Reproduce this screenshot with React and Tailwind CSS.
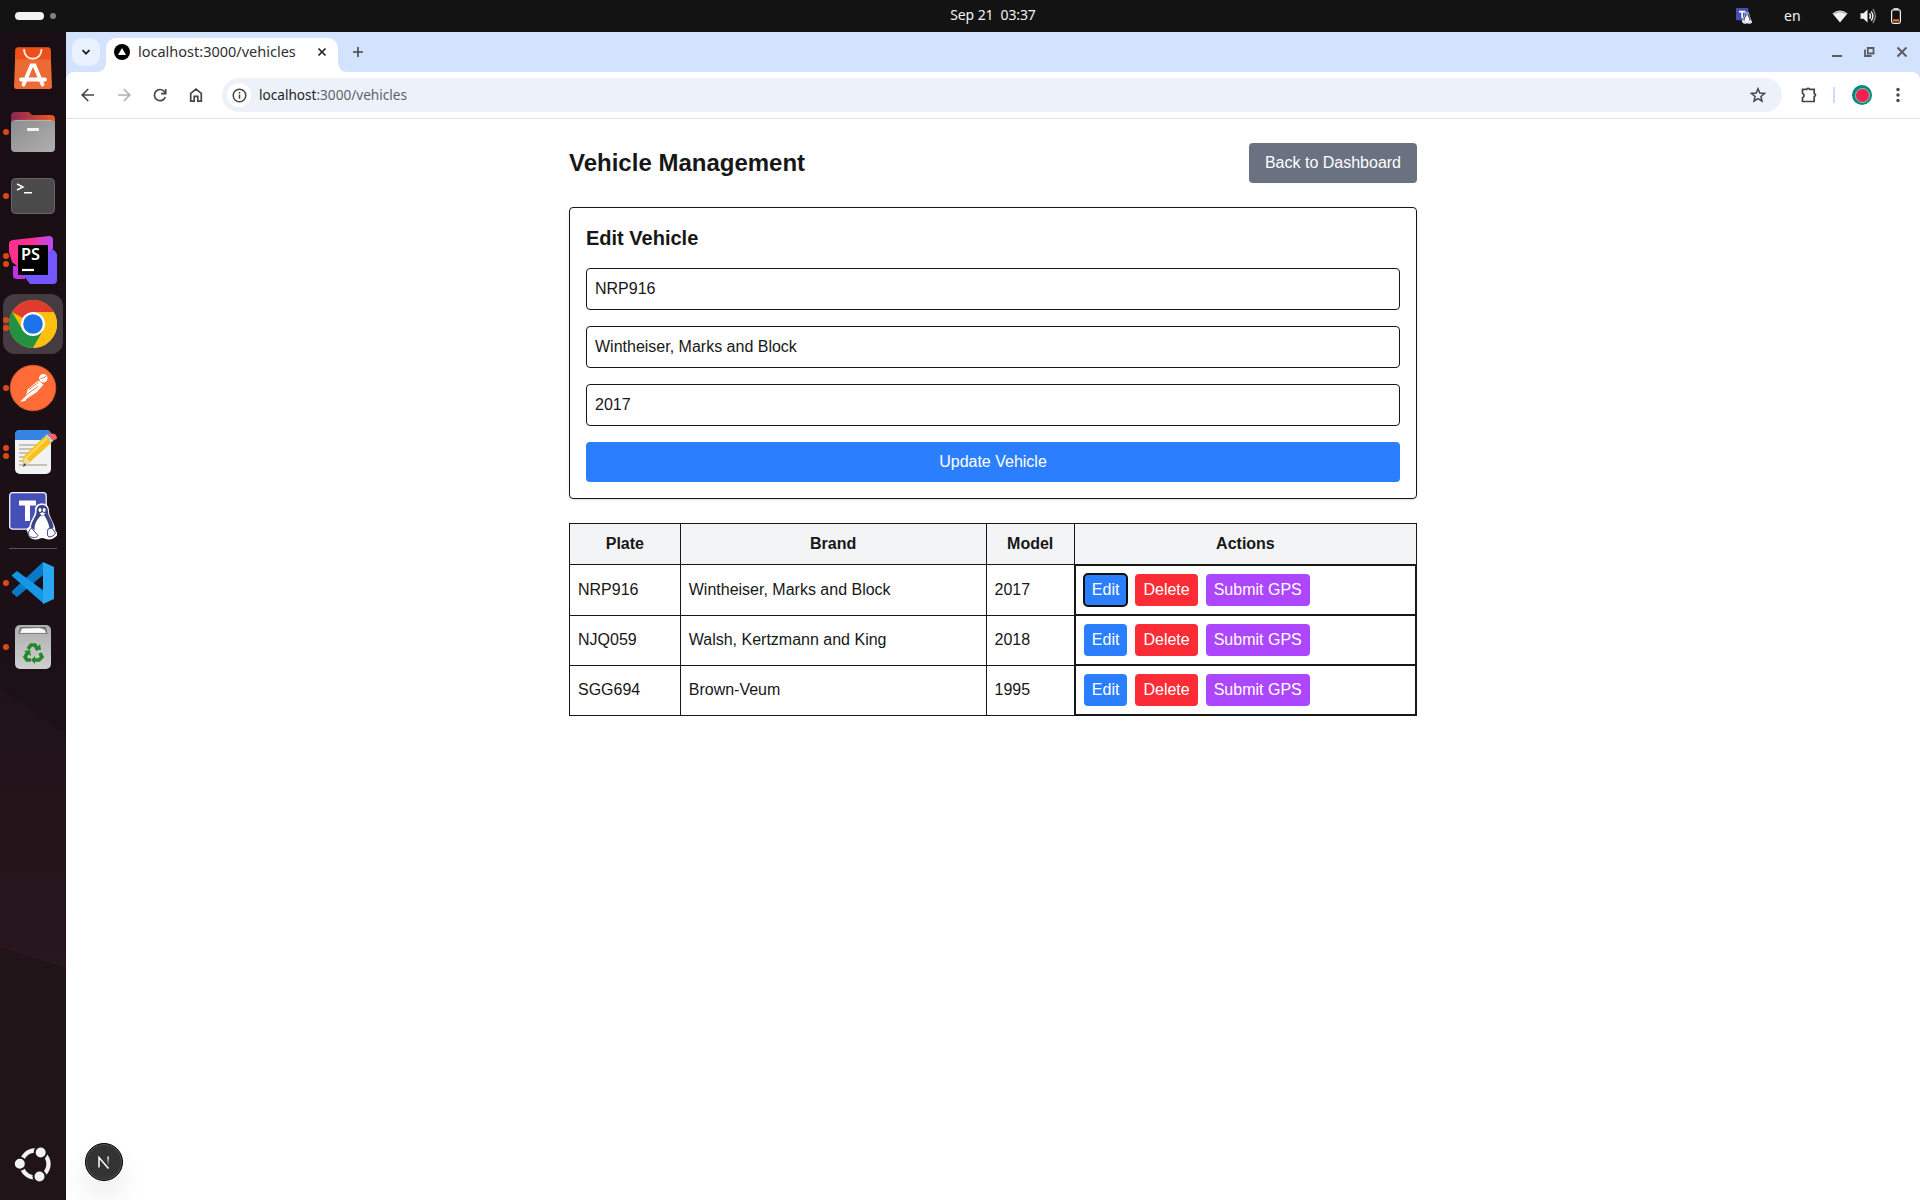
const iconStroke = "fill-none stroke-[#454746]";

function Dots({ n }) {
  return (
    <span className="flex w-[11px] shrink-0 flex-col items-end gap-[2px] pr-[2.5px]">
      {Array.from({ length: n }).map((_, i) => (
        <span key={i} className="h-[6px] w-[6px] rounded-full bg-[#dd4814]" />
      ))}
    </span>
  );
}

function DockItem({ dots, active, children }) {
  return (
    <div className="flex h-16 w-[66px] items-center">
      <div className={active ? "ml-[3px] flex h-[60px] w-[60px] items-center rounded-xl bg-[#453c41]" : "ml-[3px] flex h-[60px] w-[60px] items-center rounded-xl"}>
        <div className="-ml-[3px] flex items-center">
          <Dots n={dots} />
          <svg viewBox="0 0 48 48" className="-ml-[2px] h-12 w-12">{children}</svg>
        </div>
      </div>
    </div>
  );
}

function Penguin() {
  return (
    <g>
      <path d="M33 11.500c-5.500 0-7.500 3.500-7 8.500-.5 4-5 9-5.500 14.500-3 2-3.500 3.500-2 5.500.5 5 4 7.500 8.500 7.500 3 0 4-1.500 6-1.500s4 1.500 7 1.500c3 0 4.500-1 7-3 2-1.500 1.500-4.500-.5-5.500 0-7-6-13-6.500-19C40 15 38.500 11.500 33 11.500z" fill="#fff" />
      <path d="M33 13c-4 0-6 3-5.500 7.500-.5 4.500-5.500 9.500-5.500 15l3.500 2.500h15l4-2.500c0-6-5-10-5.500-15.500C39 15.500 37 13 33 13z" fill="#3b4383" />
      <path d="M32.500 23.500c-4 2.500-7 8-7 13.500 2 6.500 12 6.500 15 .5 0-5.500-3.500-11-5-14z" fill="#fff" />
      <ellipse cx="31" cy="18" rx="1.500" ry="2" fill="#fff" />
      <ellipse cx="35.200" cy="18" rx="1.500" ry="2" fill="#fff" />
      <path d="M30.500 21.500l3-1.200 3 1.200-3 2.200z" fill="#fff" />
      <path d="M22.500 36l6.500 7.500c-1 2.500-5 2.500-8 1-2-1-1.500-4-1-5.500zM43 36l3.500 5c-1 2-3.500 4-6.500 4-2-1-2-4-1-8z" fill="#fff" stroke="#3b4383" strokeWidth="1" />
    </g>
  );
}

function Dock() {
  return (
    <aside className="grid w-[66px] shrink-0">
      <svg viewBox="0 0 66 1168" preserveAspectRatio="none" className="col-start-1 row-start-1 h-full w-[66px]">
        <defs>
          <linearGradient id="wall" x1="0" y1="0" x2="0" y2="1"><stop stopColor="#180e14" /><stop offset=".5" stopColor="#1b1016" /><stop offset="1" stopColor="#1f1218" /></linearGradient>
          <linearGradient id="facet" x1="0" y1="0" x2="0" y2="1"><stop stopColor="#20121b" /><stop offset=".5" stopColor="#231519" /><stop offset="1" stopColor="#281620" /></linearGradient>
        </defs>
        <rect width="66" height="1168" fill="url(#wall)" />
        <path d="M0 656l66 46v234L0 916z" fill="url(#facet)" />
        <path d="M0 916l66 20v232H0z" fill="#201419" />
      </svg>
      <nav className="col-start-1 row-start-1 flex flex-col pt-[3.500px]">
        <DockItem dots={0}>
          <path d="M8.500 3.500h31q1.800 0 2 2l1.500 37q0 2.500-2.500 2.500h-33Q5 45 5 42.500L6.500 5.500q.2-2 2-2z" fill="#ee6a34" />
          <path d="M8.500 3.500h31q1.800 0 2 2l.5 10H6l.5-10q.2-2 2-2z" fill="#ef4f19" />
          <path d="M15 5c0 13 17.500 13 17.500 0" fill="none" stroke="#fff1ea" strokeWidth="1.800" />
          <path d="M14.500 40.500l8-19h3l8 19M12 35.500h24" fill="none" stroke="#fff" strokeWidth="3.800" strokeLinecap="round" />
        </DockItem>
        <DockItem dots={1}>
          <defs>
            <linearGradient id="folder" x1="0" x2="1"><stop stopColor="#872656" /><stop offset="1" stopColor="#f2581c" /></linearGradient>
            <linearGradient id="front" x1="0" y1="0" x2="1" y2="1"><stop stopColor="#8c8c8c" /><stop offset="1" stopColor="#b0b0b0" /></linearGradient>
          </defs>
          <path d="M2 8q0-4 4-4h14l3 3h19q4 0 4 4v12H2z" fill="url(#folder)" />
          <rect x="2" y="12" width="44" height="32" rx="4" fill="url(#front)" />
          <path d="M6 12.400h36" stroke="#bbb" strokeWidth=".8" />
          <rect x="18" y="20" width="12" height="3" rx=".8" fill="#f4f4f4" />
        </DockItem>
        <DockItem dots={1}>
          <rect x="2.500" y="6.500" width="43" height="35" rx="4" fill="#4a4a4a" stroke="#666" />
          <path d="M8 12l6 3-6 3M15 20.800h8" fill="none" stroke="#fff" strokeWidth="1.500" />
        </DockItem>
        <DockItem dots={2}>
          <defs><linearGradient id="ps" x1="0" y1="0" x2="1" y2="0"><stop stopColor="#ff318c" /><stop offset=".5" stopColor="#ff2f94" /><stop offset="1" stopColor="#b74af7" /></linearGradient></defs>
          <path d="M39 14h6l3 4v26q0 4-4 4H21l-6-8z" fill="#7256ff" />
          <path d="M4 30h12v13H8q-4 0-4-3z" fill="#bd34e6" />
          <path d="M4 4L40 0q4 0 4 4v9L12 33 3 26 0 16V8q0-3.500 4-4z" fill="url(#ps)" />
          <rect x="9" y="9" width="30" height="30" fill="#000" />
          <text x="12" y="24.300" fontFamily="Noto Sans, sans-serif" fontSize="15.500" fontWeight="600" fill="#fff" textLength="19" lengthAdjust="spacingAndGlyphs">PS</text>
          <path d="M13 34h12" stroke="#fff" strokeWidth="2.200" />
        </DockItem>
        <DockItem dots={2} active>
          <circle cx="24" cy="24" r="24" fill="#fbbc04" />
          <path d="M24 24L3.200 12A24 24 0 0 1 44.800 12z" fill="#df3b2e" />
          <path d="M3.200 12A24 24 0 0 0 24 48L34.400 30 13.600 30z" fill="#249041" />
          <path d="M24 12h20.800A24 24 0 0 1 24 48l10.400-18z" fill="#fcc011" />
          <circle cx="24" cy="24" r="12" fill="#fff" /><circle cx="24" cy="24" r="9.800" fill="#1a73e8" />
        </DockItem>
        <DockItem dots={1}>
          <circle cx="24" cy="24" r="22.800" fill="#ff6c37" stroke="#dc5726" strokeWidth=".8" />
          <circle cx="34.300" cy="14.200" r="4.200" fill="#fff" />
          <path d="M29.500 16.500l5 4-6.500 7.500-10 6.500-2 2.500-5 .8 5.500-5.300 2.500-7.500z" fill="#fff" />
          <path d="M31.500 14.500l3.500-.8 2.500-2M20 25.500l9.500-7M20.500 28.500l9-6.500M15 33l6-5" fill="none" stroke="#ff6c37" strokeWidth=".9" />
        </DockItem>
        <DockItem dots={2}>
          <rect x="6" y="2" width="36" height="44" rx="5" fill="#f2f2f2" />
          <path d="M6 12V7q0-5 5-5h26q5 0 5 5v5z" fill="#3584e4" />
          <path d="M10 17h18M10 21h16M10 25h14M10 29h11M10 33h8M10 37h28" stroke="#c6c2b6" strokeWidth="1.800" />
          <path d="M36 8l6.500 6.500-22 20-4.500 2.500-3-3 2-6z" fill="#f6c21b" />
          <path d="M38 10l-21 20" stroke="#ffdc60" strokeWidth="2" />
          <path d="M16 29l5 5-6 4-1-2z" fill="#f0dcb0" /><path d="M15 35l2 2-3 2z" fill="#333" />
          <path d="M36 8l2-2 6.500 6.500-2 2z" fill="#ccc" /><path d="M38 6q4-1 7-.3 3 1.300 3 5l-3.500 1.800z" fill="#ef6464" />
        </DockItem>
        <DockItem dots={0}>
          <rect x=".7" y=".7" width="36.500" height="36.500" rx="3" fill="#464eb8" stroke="#f5f5ff" strokeWidth="1.300" />
          <path d="M10 11h17M18.500 11v18" stroke="#fff" strokeWidth="5" />
          <Penguin />
        </DockItem>
        <div className="mx-[9px] h-px bg-[#5a5155]" />
        <div className="mt-[2px]">
          <DockItem dots={1}>
            <path d="M34 3v13L8 38 3 34v-2z" fill="#0879c7" />
            <path d="M3 16l5-4 27 20v13L3 17z" fill="#1596e6" />
            <path d="M34 3l11 5v32l-11 5V3z" fill="#29a8f2" />
          </DockItem>
        </div>
        <DockItem dots={1}>
          <defs><linearGradient id="bin" x1="0" y1="0" x2="0" y2="1"><stop stopColor="#aeaeae" /><stop offset="1" stopColor="#cfcfcf" /></linearGradient></defs>
          <rect x="6" y="2" width="36" height="44" rx="5" fill="url(#bin)" />
          <path d="M9.500 11l1.500-6q.3-1 1.500-1h23q1.200 0 1.500 1l1.500 6z" fill="#6a6a6a" />
          <path d="M11 10l2-4.500 17-.5 5.500 1.500L37 10z" fill="#fafafa" stroke="#ccc" strokeWidth=".5" />
          <g fill="none" stroke="#25882a" strokeWidth="3.600">
            <path d="M19 26l3-4h4l3 5" /><path d="M31 30l2 4-3 3h-5" /><path d="M22 37h-4l-2-3 3-5" />
          </g>
          <path d="M26 27h6l-1-6zM26 33v8l-4-4zM15 28l6-1 1 6z" fill="#25882a" />
        </DockItem>
        <div className="mt-auto mb-3 flex justify-center">
          <svg viewBox="0 0 48 48" className="h-12 w-12">
            <circle cx="26" cy="24" r="13.500" fill="none" stroke="#f2f2f2" strokeWidth="4.300" />
            <g fill="#f2f2f2" stroke="#201419" strokeWidth="2"><circle cx="10.800" cy="23.700" r="6" /><circle cx="31.700" cy="12.500" r="6" /><circle cx="30.500" cy="36.500" r="6" /></g>
          </svg>
        </div>
      </nav>
    </aside>
  );
}

function TopBar() {
  return (
    <header className="grid h-8 shrink-0 grid-cols-3 items-center bg-[#131313] font-['Noto_Sans',sans-serif] text-[14px] text-[#f2f2f2]">
      <div className="flex items-center gap-[6px] pl-[15px]">
        <span className="h-2 w-[29px] rounded-full bg-[#f2f2f2]" />
        <span className="h-[6px] w-[6px] rounded-full bg-[#808080]" />
      </div>
      <div className="flex justify-center gap-[7px] pb-[2px] pl-[66px] leading-[30px] tracking-[-0.100px] whitespace-nowrap">
        <span>Sep 21</span><span>03:37</span>
      </div>
      <div className="flex items-center justify-end pr-4">
        <svg viewBox="0 0 48 48" className="h-4 w-4"><rect width="37" height="37" rx="3" fill="#464eb8" /><path d="M9 11h19M18.500 11v20" stroke="#fff" strokeWidth="5" /><Penguin /></svg>
        <span className="ml-8 w-4 pb-[2px]">en</span>
        <svg viewBox="0 0 16 16" className="ml-8 h-4 w-4"><path d="M.5 5.500Q8 -.5 15.500 5.500L8 14.500z" fill="#f2f2f2" /><path d="M2 6q6-4.300 12 0" fill="none" stroke="#8a8a8a" strokeWidth=".8" /></svg>
        <svg viewBox="0 0 16 16" className="ml-3 h-4 w-4"><path d="M.5 5.300h3L7.500 1.500v13l-4-3.800h-3z" fill="#f2f2f2" /><path d="M9.500 5.300q2 2.700 0 5.400M11.200 3.300q3.300 4.700 0 9.400" fill="none" stroke="#f2f2f2" strokeWidth="1.400" /><path d="M12.800 1q5 7 0 14" fill="none" stroke="#999" strokeWidth="1.200" /></svg>
        <svg viewBox="0 0 16 16" className="ml-3 h-4 w-4"><rect x="3.600" y="1.800" width="8.800" height="13.500" rx="1.800" fill="none" stroke="#f2f2f2" strokeWidth="1.200" /><path d="M5.500 .9h5" stroke="#f2f2f2" strokeWidth="1.500" /><path d="M5 12.400h6" stroke="#f37329" strokeWidth="2.200" /></svg>
      </div>
    </header>
  );
}

function TabStrip() {
  return (
    <div className="flex h-10 shrink-0 bg-[#d3e3fd]">
      <div className="mt-[6px] ml-[6px] flex h-7 w-7 items-center justify-center rounded-[10px] bg-[#e9f1fe]">
        <svg viewBox="0 0 10 10" className="h-[10px] w-[10px]"><path d="M1.500 3.200L5 6.700l3.500-3.500" fill="none" stroke="#1f1f1f" strokeWidth="1.800" /></svg>
      </div>
      <div className="flex flex-col justify-end">
        <svg viewBox="0 0 10 10" className="-ml-1 h-[10px] w-[10px]"><path d="M10 0v10H0Q10 10 10 0" fill="#fff" /></svg>
      </div>
      <div className="mt-[6px] flex h-[34px] w-[232px] items-center rounded-t-[10px] bg-white pb-[6px]">
        <svg viewBox="0 0 16 16" className="ml-2 h-4 w-4"><circle cx="8" cy="8" r="8" fill="#000" /><path d="M8 4l4 7H4z" fill="#fff" /></svg>
        <span className="ml-2 w-[158px] pb-px font-['Noto_Sans',sans-serif] text-[14.500px] leading-[27px] whitespace-nowrap text-[#303030]">localhost:3000/vehicles</span>
        <svg viewBox="0 0 10 10" className="ml-[21px] h-[10px] w-[10px]"><path d="M1.500 1.500l7 7M8.500 1.500l-7 7" stroke="#1f1f1f" strokeWidth="1.600" /></svg>
      </div>
      <div className="flex flex-col justify-end">
        <svg viewBox="0 0 10 10" className="h-[10px] w-[10px]"><path d="M0 0v10H10Q0 10 0 0" fill="#fff" /></svg>
      </div>
      <svg viewBox="0 0 12 12" className="mt-[14px] ml-1 h-3 w-3"><path d="M6 1v10M1 6h10" stroke="#474747" strokeWidth="1.600" /></svg>
      <div className="mt-[14px] ml-auto flex gap-5 pr-3 text-[#5a5d63]">
        <svg viewBox="0 0 12 12" className="h-3 w-3"><path d="M1 10h10" stroke="currentColor" strokeWidth="2" /></svg>
        <svg viewBox="0 0 12 12" className="h-3 w-3"><path d="M4.800 2h5.700v5.500H4.800zM2 3.500v6.500h6.500" fill="none" stroke="currentColor" strokeWidth="1.800" /></svg>
        <svg viewBox="0 0 12 12" className="ml-px h-3 w-3"><path d="M1.500 1.500l9 9M10.500 1.500l-9 9" stroke="currentColor" strokeWidth="2" /></svg>
      </div>
    </div>
  );
}

function Toolbar() {
  return (
    <div className="bg-[#d3e3fd]">
      <div className="flex h-[47px] items-center rounded-t-lg border-b border-[#dfe1e5] bg-white">
        <div className="flex gap-5 pl-[14px]">
          <svg viewBox="0 0 16 16" className={"h-4 w-4 " + iconStroke} strokeWidth="1.700"><path d="M14 8H2.500M8.200 2L2.200 8l6 6" /></svg>
          <svg viewBox="0 0 16 16" className="h-4 w-4 fill-none stroke-[#b0b1b1]" strokeWidth="1.700"><path d="M2 8h11.500M7.800 2l6 6-6 6" /></svg>
          <svg viewBox="0 0 16 16" className={"h-4 w-4 " + iconStroke} strokeWidth="1.700"><path d="M13.300 10a5.600 5.600 0 1 1-.8-5.300L13.500 6M13.700 2v4.700H9" /></svg>
          <svg viewBox="0 0 16 16" className={"h-4 w-4 " + iconStroke} strokeWidth="1.700"><path d="M2.700 14.200V6.300L8 2l5.300 4.300v7.900H9.800V9.300H6.200v4.900z" /></svg>
        </div>
        <div className="ml-[18px] flex h-[34px] w-[1560px] items-center rounded-full bg-[#edf1fa]">
          <span className="ml-[5px] flex h-6 w-6 items-center justify-center rounded-full bg-white">
            <svg viewBox="0 0 16 16" className={"h-[15px] w-[15px] " + iconStroke} strokeWidth="1.600"><circle cx="8" cy="8" r="6.700" /><path d="M8 7v4.500M8 4.300v1.600" /></svg>
          </span>
          <span className="ml-2 font-['Noto_Sans',sans-serif] text-[13.600px] whitespace-nowrap text-[#1f1f1f]">localhost<span className="text-[#5f6368]">:3000/vehicles</span></span>
          <svg viewBox="0 0 16 16" className={"mr-4 ml-auto h-4 w-4 " + iconStroke} strokeWidth="1.500"><path d="M8 1.800l1.800 4.300 4.700.4-3.600 3 1.100 4.600L8 11.600l-4 2.500 1.100-4.600-3.600-3 4.700-.4z" /></svg>
        </div>
        <svg viewBox="0 0 18 18" className={"ml-[18px] h-[18px] w-[18px] " + iconStroke} strokeWidth="1.700"><path d="M2.500 3.300h4.300q1.400-2 2.800 0h4.600v4.300q2.700 1.400 0 2.800v5.100H2.500v-3.800q3.200-2.200 0-4.400z" /></svg>
        <span className="ml-[15px] h-4 w-[2px] bg-[#c9dcfb]" />
        <span className="ml-[17px] flex h-5 w-5 items-center justify-center rounded-full bg-[#00897b]"><span className="h-[15px] w-[15px] rounded-full border border-[#8bcbb7] bg-[#f02052]" /></span>
        <svg viewBox="0 0 4 16" className="ml-6 h-4 w-1 fill-[#454746]"><circle cx="2" cy="2.500" r="1.700" /><circle cx="2" cy="8" r="1.700" /><circle cx="2" cy="13.500" r="1.700" /></svg>
      </div>
    </div>
  );
}

const vehicles = [
  ["NRP916", "Wintheiser, Marks and Block", "2017"],
  ["NJQ059", "Walsh, Kertzmann and King", "2018"],
  ["SGG694", "Brown-Veum", "1995"],
];

function VehiclesPage() {
  return (
    <main className="mx-auto w-full max-w-4xl p-6">
      <div className="mb-6 flex items-center justify-between">
        <h1 className="text-2xl font-bold">Vehicle Management</h1>
        <button className="rounded bg-[#6a7282] px-4 py-2 text-white">Back to Dashboard</button>
      </div>
      <form className="mb-6 rounded border border-[#171717] p-4 shadow-sm">
        <h2 className="mb-4 text-xl font-semibold">Edit Vehicle</h2>
        <div className="space-y-4">
          {vehicles[0].map((v) => (
            <input key={v} defaultValue={v} className="block w-full rounded border border-[#171717] p-2" />
          ))}
          <button type="button" className="block w-full rounded bg-blue-500 px-4 py-2 text-white">Update Vehicle</button>
        </div>
      </form>
      <table className="w-full border-collapse border border-[#171717]">
        <thead>
          <tr className="bg-gray-100">
            {["Plate", "Brand", "Model", "Actions"].map((h) => (
              <th key={h} className="border border-[#171717] p-2">{h}</th>
            ))}
          </tr>
        </thead>
        <tbody>
          {vehicles.map((row, i) => (
            <tr key={row[0]}>
              {row.map((c) => (
                <td key={c} className="border border-[#171717] p-2">{c}</td>
              ))}
              <td className="flex gap-2 border border-[#171717] p-2">
                <button className={i === 0 ? "rounded bg-blue-500 px-2 py-1 text-white outline-2 -outline-offset-1 outline-[#101010]" : "rounded bg-blue-500 px-2 py-1 text-white"}>Edit</button>
                <button className="rounded bg-red-500 px-2 py-1 text-white">Delete</button>
                <button className="rounded bg-purple-500 px-2 py-1 text-white">Submit GPS</button>
              </td>
            </tr>
          ))}
        </tbody>
      </table>
    </main>
  );
}

export default function App() {
  return (
    <div className="flex h-[1200px] w-[1920px] flex-col overflow-hidden bg-white">
      <TopBar />
      <div className="flex min-h-0 flex-1">
        <Dock />
        <div className="flex min-w-0 flex-1 flex-col">
          <TabStrip />
          <Toolbar />
          <div className="flex flex-1 flex-col justify-between font-['Liberation_Sans',Arial,sans-serif] text-base text-[#171717]">
            <VehiclesPage />
            <div className="mb-[19px] ml-[19px] flex h-[38px] w-[38px] items-center justify-center rounded-full border border-black bg-[#333] shadow-[0_16px_32px_-8px_rgba(0,0,0,0.24)] ring-1 ring-[#555] ring-inset">
              <svg viewBox="0 0 14 14" className="h-[14px] w-[14px]">
                <defs><linearGradient id="nx" x1="0" y1="0" x2="0" y2="1"><stop stopColor="#fff" /><stop offset="1" stopColor="#fff" stopOpacity="0" /></linearGradient></defs>
                <path d="M2 12.500V2.500l9.500 11" fill="none" stroke="#fff" strokeWidth="1.500" /><rect x="10.400" y="1.500" width="1.500" height="9" fill="url(#nx)" />
              </svg>
            </div>
          </div>
        </div>
      </div>
    </div>
  );
}
